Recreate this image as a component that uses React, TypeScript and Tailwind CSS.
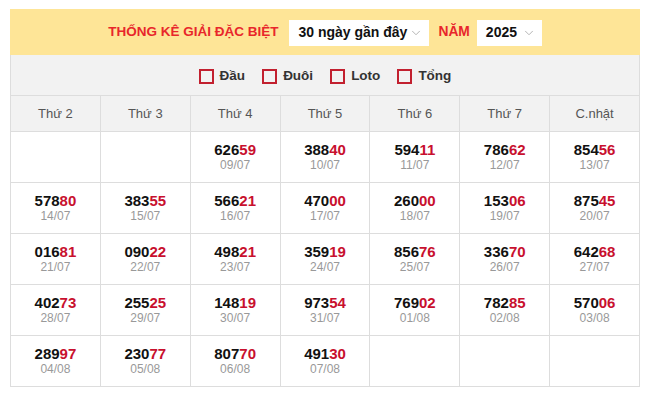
import { ChevronDown } from 'lucide-react';

const days = ['Thứ 2', 'Thứ 3', 'Thứ 4', 'Thứ 5', 'Thứ 6', 'Thứ 7', 'C.nhật'];

// null = empty cell
const cells: ([string, string] | null)[] = [
  null,
  null,
  ['62659', '09/07'],
  ['38840', '10/07'],
  ['59411', '11/07'],
  ['78662', '12/07'],
  ['85456', '13/07'],
  ['57880', '14/07'],
  ['38355', '15/07'],
  ['56621', '16/07'],
  ['47000', '17/07'],
  ['26000', '18/07'],
  ['15306', '19/07'],
  ['87545', '20/07'],
  ['01681', '21/07'],
  ['09022', '22/07'],
  ['49821', '23/07'],
  ['35919', '24/07'],
  ['85676', '25/07'],
  ['33670', '26/07'],
  ['64268', '27/07'],
  ['40273', '28/07'],
  ['25525', '29/07'],
  ['14819', '30/07'],
  ['97354', '31/07'],
  ['76902', '01/08'],
  ['78285', '02/08'],
  ['57006', '03/08'],
  ['28997', '04/08'],
  ['23077', '05/08'],
  ['80770', '06/08'],
  ['49130', '07/08'],
  null,
  null,
  null,
];

const filters = ['Đầu', 'Đuôi', 'Loto', 'Tổng'];

function Select({ label, width }: { label: string; width: string }) {
  return (
    <div className={`${width} h-[26px] bg-white flex items-center justify-between pl-[9px] pr-[6px]`}>
      <span className="text-[14px] font-bold text-[#111]">{label}</span>
      <ChevronDown className="h-[14px] w-[14px] text-[#aaa]" strokeWidth={1.5} />
    </div>
  );
}

export default function App() {
  return (
    <div className="min-h-screen bg-white pt-[9px] pl-[10px] font-['Liberation_Sans',Arial,sans-serif]">
      <div className="w-[630px]">
        {/* Header */}
        <div className="h-[46px] bg-[#fee597] flex items-center justify-center pt-[1px]">
          <span className="text-[13.5px] font-bold text-[#e8262b] uppercase mr-[11px]">Thống kê giải đặc biệt</span>
          <Select label="30 ngày gần đây" width="w-[140px]" />
          <span className="text-[13.8px] font-bold text-[#e8262b] ml-[9px] mr-[7px]">NĂM</span>
          <Select label="2025" width="w-[65px]" />
        </div>

        {/* Filters */}
        <div className="h-[40px] bg-[#f2f2f2] border-x border-[#ddd] flex items-center justify-center gap-[17px] pt-[2px]">
          {filters.map((f) => (
            <label key={f} className="flex items-center gap-[6px]">
              <span className="w-[15px] h-[15px] border-2 border-[#c2202f] bg-[#f2f2f2]" />
              <span className="text-[13.5px] font-bold text-[#333]">{f}</span>
            </label>
          ))}
        </div>

        {/* Calendar */}
        <div className="grid grid-cols-7 border-l border-t border-[#ddd]">
          {days.map((d) => (
            <div
              key={d}
              className="h-[36px] bg-[#f2f2f2] border-r border-b border-[#ddd] flex items-center justify-center text-[13px] text-[#555]"
            >
              {d}
            </div>
          ))}
          {cells.map((c, i) => (
            <div
              key={i}
              className="h-[51px] border-r border-b border-[#ddd] flex flex-col items-center justify-center pb-[1px]"
            >
              {c && (
                <>
                  <div className="text-[15px] font-bold leading-[17px] text-[#111]">
                    {c[0].slice(0, 3)}
                    <span className="text-[#c8102e]">{c[0].slice(3)}</span>
                  </div>
                  <div className="text-[12px] leading-[15px] text-[#999]">{c[1]}</div>
                </>
              )}
            </div>
          ))}
        </div>
      </div>
    </div>
  );
}
